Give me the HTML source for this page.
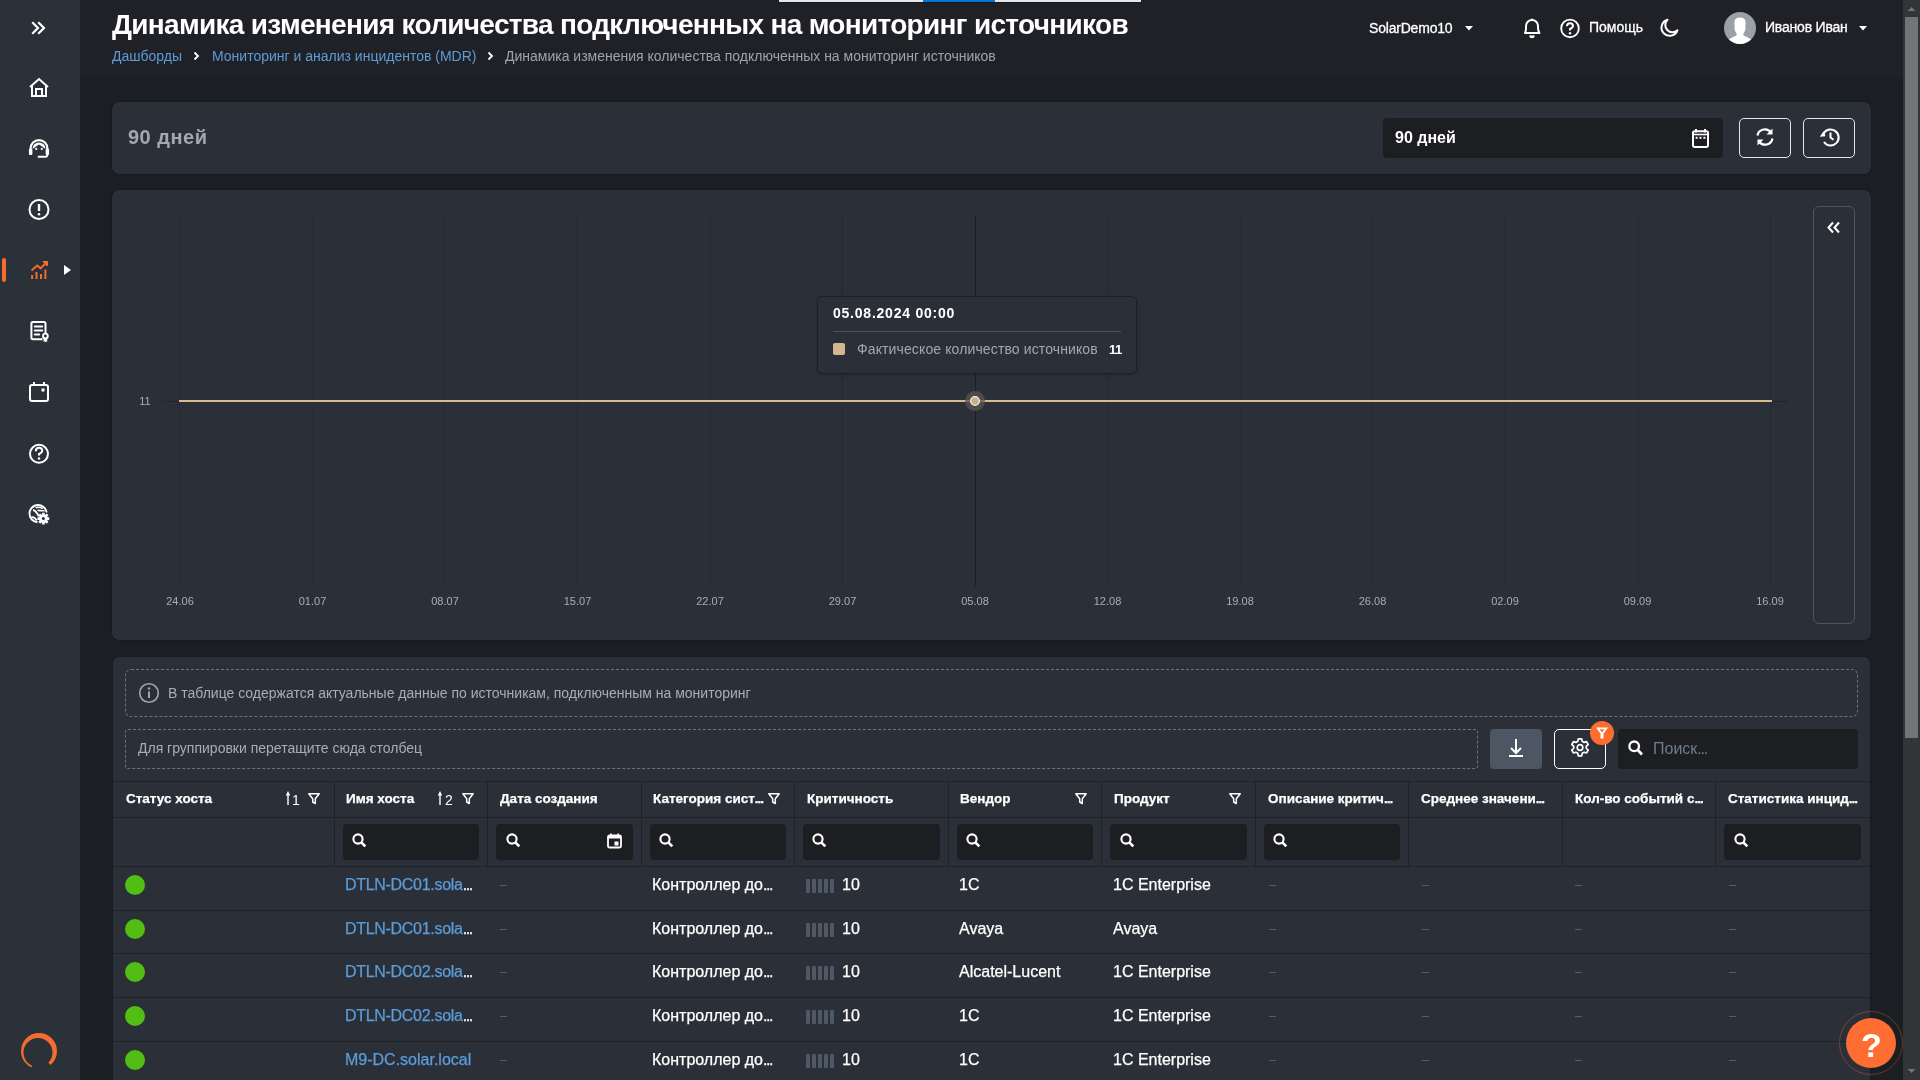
<!DOCTYPE html>
<html><head><meta charset="utf-8">
<style>
*{margin:0;padding:0;box-sizing:border-box}
html,body{width:1920px;height:1080px;overflow:hidden;background:#1b1e22;font-family:"Liberation Sans",sans-serif;color:#fff}
.a{position:absolute}
.t{position:absolute;white-space:nowrap;line-height:1}
#side{left:0;top:0;width:80px;height:1080px;background:#2b3139}
#hdr{left:80px;top:0;width:1823px;height:78px;background:#1f2126}
.panel{position:absolute;left:112px;width:1758px;background:#2b3038;border-radius:6px;box-shadow:0 0 0 1px rgba(20,22,26,.5)}
#sb{left:1903px;top:0;width:17px;height:1080px;background:#323438}
svg{position:absolute;overflow:visible}
.inp{position:absolute;background:#1c1e22;border-radius:4px}
.hd{position:absolute;top:792px;font-size:13.5px;font-weight:700;white-space:nowrap;line-height:1;-webkit-text-stroke:0.25px #fff}
.cell{position:absolute;font-size:16px;white-space:nowrap;line-height:1;-webkit-text-stroke:0.25px currentColor}
.dash{position:absolute;width:12px;height:1px;background:#565d67}
</style></head><body><div style="position:absolute;left:0;top:0;width:1920px;height:1080px;will-change:transform">
<div id="side" class="a"></div>
<div id="hdr" class="a"></div>

<!-- browser overlay bar -->
<div class="a" style="left:779px;top:0;width:362px;height:2px;background:#e6e6e6"></div>
<div class="a" style="left:923px;top:0;width:72px;height:2px;background:#0078d7"></div>
<div class="a" style="left:779px;top:2px;width:362px;height:1px;background:#14171b"></div>

<!-- sidebar icons -->
<svg style="left:0;top:0" width="80" height="1080" viewBox="0 0 80 1080">
 <g fill="none" stroke="#fff" stroke-width="2.2" stroke-linecap="square">
  <path d="M33 23 L38 28 L33 33 M39 23 L44 28 L39 33"/>
 </g>
 <!-- home -->
 <g fill="none" stroke="#fff" stroke-width="2">
  <path d="M30 87 L39 79 L48 87"/>
  <path d="M32 86 V96 H46 V86"/>
  <path d="M36 96 V89 H42 V96"/>
 </g>
 <!-- headset -->
 <path d="M30.6 151 V148.5 A8.4 8.4 0 0 1 47.4 148.5 V151" fill="none" stroke="#fff" stroke-width="2.2"/>
 <rect x="28.9" y="148.8" width="3.5" height="6.2" rx="1.3" fill="#fff"/>
 <rect x="45.6" y="148.8" width="3.5" height="6.2" rx="1.3" fill="#fff"/>
 <path d="M47.3 154 V155 Q47.3 156.8 45.5 156.8 H37.8" fill="none" stroke="#fff" stroke-width="1.9"/>
 <path d="M32.4 149 A6.6 6.6 0 0 1 45.6 149 L39 144.6 Z" fill="#fff"/>
 <circle cx="36.2" cy="148.9" r="1.1" fill="#fff"/><circle cx="41.8" cy="148.9" r="1.1" fill="#fff"/>
 <!-- alert -->
 <circle cx="39" cy="209.5" r="9.5" fill="none" stroke="#fff" stroke-width="2"/>
 <path d="M39 204 V211" stroke="#fff" stroke-width="2.4"/>
 <circle cx="39" cy="214.3" r="1.3" fill="#fff"/>
 <!-- active bar -->
 <rect x="2" y="258" width="4" height="24" rx="2" fill="#f56c2d"/>
 <!-- chart icon -->
 <g stroke="#f56c2d" stroke-width="2" fill="none">
  <path d="M31.5 270.5 L37.3 265.6 L40.6 268.4 L46.5 262.5"/>
  <path d="M43 262 H47 V266"/>
  <path d="M32.1 275 V279 M36.5 272 V279 M41 274 V279 M45.4 269.5 V279"/>
 </g>
 <path d="M64 265 L71 270 L64 275 Z" fill="#fff"/>
 <!-- certificate -->
 <path d="M42.5 339.2 H33 Q31.4 339.2 31.4 337.6 V323.6 Q31.4 322 33 322 H43.9 Q45.5 322 45.5 323.6 V333" fill="none" stroke="#fff" stroke-width="2"/>
 <path d="M34.8 326.5 H42.2 M34.8 330.5 H42.2 M34.8 334.5 H39.2" stroke="#fff" stroke-width="2" stroke-linecap="round"/>
 <circle cx="45.4" cy="336" r="2.4" fill="none" stroke="#fff" stroke-width="1.9"/>
 <path d="M43.6 338 V342.2 L44.5 341.3 L45.4 342.2 L46.3 341.3 L47.2 342.2 V338 Z" fill="#fff"/>
 <!-- calendar -->
 <g fill="none" stroke="#fff" stroke-width="2">
  <rect x="30" y="385" width="18" height="16" rx="2"/>
  <path d="M34 382 V386 M44 382 V386"/>
 </g>
 <rect x="41.5" y="388.5" width="3" height="3" fill="#fff"/>
 <!-- question -->
 <circle cx="39" cy="453.8" r="9" fill="none" stroke="#fff" stroke-width="2"/>
 <path d="M35.8 451.3 Q35.8 447.8 39 447.8 Q42.2 447.8 42.2 450.8 Q42.2 452.6 39 454 V455.5" fill="none" stroke="#fff" stroke-width="2"/>
 <circle cx="39" cy="458.5" r="1.2" fill="#fff"/>
 <!-- globe gear -->
 <path d="M46.6 512.5 A8.6 8.6 0 1 0 37.5 522.2" fill="none" stroke="#fff" stroke-width="1.9"/>
 <path d="M35.6 507.8 Q39.5 506.6 42.8 508.6" fill="none" stroke="#fff" stroke-width="1.5"/>
 <path d="M33 510 Q36 510.5 38.8 516.3" fill="none" stroke="#fff" stroke-width="1.8"/>
 <path d="M37.5 510.3 Q41 511 44.5 510.7" fill="none" stroke="#fff" stroke-width="1.6"/>
 <path d="M31.5 517.2 Q34.5 516.5 36.8 520.5" fill="none" stroke="#fff" stroke-width="1.8"/>
 <g transform="translate(43.4 518.6)">
  <circle r="4.4" fill="#fff"/>
  <path d="M-1.3 -5.9 H1.3 V5.9 H-1.3Z M-5.9 -1.3 V1.3 H5.9 V-1.3Z" fill="#fff"/>
  <path d="M-1.3 -5.9 H1.3 V5.9 H-1.3Z M-5.9 -1.3 V1.3 H5.9 V-1.3Z" fill="#fff" transform="rotate(45)"/>
  <circle r="1.5" fill="#2b3139"/>
 </g>
 <!-- spinner -->
 <defs><clipPath id="spc"><path clip-rule="evenodd" d="M0 1020 H80 V1080 H0 Z M39 1051 L57.9 1074.3 L26.3 1078.2 Z"/></clipPath></defs>
 <path clip-path="url(#spc)" fill-rule="evenodd" fill="#f56c2d" d="M57 1051 A18 18 0 1 1 21 1051 A18 18 0 1 1 57 1051 Z M52.5 1052.5 A14.5 14.5 0 1 0 23.5 1052.5 A14.5 14.5 0 1 0 52.5 1052.5 Z"/>
</svg>

<!-- header -->
<div class="t" style="left:112px;top:10.5px;font-size:28px;font-weight:700;letter-spacing:-0.68px">Динамика изменения количества подключенных на мониторинг источников</div>
<div class="t" style="left:112px;top:49px;font-size:14px;color:#5c9cd8">Дашборды</div>
<svg style="left:192px;top:51px" width="10" height="10"><path d="M2.5 1.5 L6 5 L2.5 8.5" fill="none" stroke="#fff" stroke-width="1.8"/></svg>
<div class="t" style="left:212px;top:49px;font-size:14px;color:#5c9cd8">Мониторинг и анализ инцидентов (MDR)</div>
<svg style="left:486px;top:51px" width="10" height="10"><path d="M2.5 1.5 L6 5 L2.5 8.5" fill="none" stroke="#fff" stroke-width="1.8"/></svg>
<div class="t" style="left:505px;top:49px;font-size:14px;color:#9ea3ab">Динамика изменения количества подключенных на мониторинг источников</div>

<div class="t" style="left:1369px;top:21px;font-size:14px;letter-spacing:-0.2px;-webkit-text-stroke:0.3px #fff">SolarDemo10</div>
<svg style="left:1465px;top:26px" width="8" height="5"><path d="M0 0 H8 L4 4.5Z" fill="#fff"/></svg>
<svg style="left:1520px;top:16px" width="24" height="24" viewBox="0 0 24 24">
 <path d="M5 17 Q6 15 6 12 V10 A6 6 0 0 1 18 10 V12 Q18 15 19.5 17 Z" fill="none" stroke="#fff" stroke-width="2" stroke-linejoin="round"/>
 <path d="M10 19.5 A2 2 0 0 0 14 19.5" fill="#fff" stroke="#fff" stroke-width="1.5"/>
 <circle cx="12" cy="3.7" r="1.2" fill="#fff"/>
</svg>
<svg style="left:1559px;top:17px" width="22" height="22" viewBox="0 0 22 22">
 <circle cx="11" cy="11.4" r="8.8" fill="none" stroke="#fff" stroke-width="1.9"/>
 <path d="M8 9.2 Q8 6.3 11 6.3 Q14 6.3 14 9 Q14 10.6 11 12 V13.4" fill="none" stroke="#fff" stroke-width="2"/>
 <circle cx="11" cy="16.3" r="1.2" fill="#fff"/>
</svg>
<div class="t" style="left:1589px;top:20px;font-size:14px;-webkit-text-stroke:0.3px #fff">Помощь</div>
<svg style="left:1658px;top:17px" width="22" height="22" viewBox="0 0 22 22">
 <path d="M9.5 2.7 A8.2 8.2 0 1 0 19.5 13.2 A7 7 0 0 1 9.5 2.7 Z" fill="none" stroke="#fff" stroke-width="2" stroke-linejoin="round"/>
</svg>
<svg style="left:1724px;top:12px" width="32" height="32" viewBox="0 0 32 32">
 <defs><clipPath id="av"><circle cx="16" cy="16" r="16"/></clipPath></defs>
 <circle cx="16" cy="16" r="16" fill="#9aa0a8"/>
 <g clip-path="url(#av)" fill="#fff">
  <path d="M10.5 10 Q10.5 5.5 16 5.5 Q21.5 5.5 21.5 10 V15 Q21.5 19.5 19.5 21 V23.5 Q24 25 28 28 V34 H4 V28 Q8 25 12.5 23.5 V21 Q10.5 19.5 10.5 15 Z"/>
 </g>
</svg>
<div class="t" style="left:1765px;top:20px;font-size:14px;letter-spacing:-0.2px;-webkit-text-stroke:0.3px #fff">Иванов Иван</div>
<svg style="left:1859px;top:26px" width="8" height="5"><path d="M0 0 H8 L4 4.5Z" fill="#fff"/></svg>

<!-- filter panel -->
<div class="panel" style="top:102px;height:72px;width:1759px;border-radius:7px"></div>
<div class="t" style="left:128px;top:127px;font-size:20px;font-weight:700;color:#a2a8b0;letter-spacing:0.5px">90 дней</div>
<div class="inp" style="left:1383px;top:118px;width:340px;height:40px"></div>
<div class="t" style="left:1395px;top:130px;font-size:16px;font-weight:700;letter-spacing:0px">90 дней</div>
<svg style="left:1688px;top:127px" width="24" height="24" viewBox="0 0 24 24">
 <rect x="5" y="4.3" width="15" height="15.6" rx="1.6" fill="none" stroke="#fff" stroke-width="2"/>
 <path d="M5 7.5 H20" stroke="#fff" stroke-width="1.6"/>
 <path d="M8 2 V5.5 M17 2 V5.5" stroke="#fff" stroke-width="2"/>
 <rect x="7.6" y="9.8" width="2" height="2" fill="#fff"/><rect x="11.5" y="9.8" width="2" height="2" fill="#fff"/><rect x="15.4" y="9.8" width="2" height="2" fill="#fff"/>
</svg>
<div class="a" style="left:1739px;top:118px;width:52px;height:40px;border:1.5px solid #e4e6e9;border-radius:5px"></div>
<svg style="left:1753px;top:125px" width="24" height="24" viewBox="0 0 24 24">
 <path d="M4.5 10.5 A7.5 7.5 0 0 1 18 7.5" fill="none" stroke="#fff" stroke-width="2.2"/>
 <path d="M19.5 3.5 V9.5 H13.5 Z" fill="#fff"/>
 <path d="M19.5 13.5 A7.5 7.5 0 0 1 6 16.5" fill="none" stroke="#fff" stroke-width="2.2"/>
 <path d="M4.5 20.5 V14.5 H10.5 Z" fill="#fff"/>
</svg>
<div class="a" style="left:1803px;top:118px;width:52px;height:40px;border:1.5px solid #e4e6e9;border-radius:5px"></div>
<svg style="left:1818px;top:125px" width="24" height="24" viewBox="0 0 24 24">
 <path d="M5.2 9.5 A8 8 0 1 1 6 17" fill="none" stroke="#fff" stroke-width="2.1"/>
 <path d="M1.8 11.8 L7.5 11.2 L5.6 6.2 Z" fill="#fff"/>
 <path d="M12.5 7.5 V12.5 L15.5 14.8" fill="none" stroke="#fff" stroke-width="2"/>
</svg>

<!-- chart panel -->
<div class="panel" style="top:190px;height:450px;width:1759px;border-radius:7px"></div>
<svg style="left:0;top:0" width="1920" height="1080" viewBox="0 0 1920 1080">
 <g stroke="#23272d" stroke-width="1" stroke-dasharray="2.5 1.5">
  <path d="M179.50 216 V586 M312.08 216 V586 M444.66 216 V586 M577.24 216 V586 M709.82 216 V586 M842.40 216 V586 M1107.56 216 V586 M1240.14 216 V586 M1372.72 216 V586 M1505.30 216 V586 M1637.88 216 V586 M1770.46 216 V586"/>
  </g>
 <path d="M164 401.5 H1787" stroke="#1d2025" stroke-width="1" stroke-dasharray="3 1"/>
 <path d="M975.5 216 V586" stroke="#1b1e22" stroke-width="1"/>
 <path d="M179 401 H1772" stroke="#d9bb8f" stroke-width="2"/>
 <circle cx="975" cy="401" r="10" fill="#5a5650" fill-opacity="0.75"/>
 <circle cx="975" cy="401" r="4.3" fill="#c9ae87" stroke="#f3efe9" stroke-width="1.3"/>
 <g font-size="11" fill="#a9aeb5" text-anchor="middle">
  <text x="180" y="605">24.06</text><text x="312.5" y="605">01.07</text><text x="445" y="605">08.07</text>
  <text x="577.5" y="605">15.07</text><text x="710" y="605">22.07</text><text x="842.5" y="605">29.07</text>
  <text x="975" y="605">05.08</text><text x="1107.5" y="605">12.08</text><text x="1240" y="605">19.08</text>
  <text x="1372.5" y="605">26.08</text><text x="1505" y="605">02.09</text><text x="1637.5" y="605">09.09</text>
  <text x="1770" y="605">16.09</text>
  <text x="145" y="405">11</text>
 </g>
</svg>
<!-- tooltip -->
<div class="a" style="left:817px;top:296px;width:320px;height:78px;background:#2b3038;border:1px solid #1d2025;border-radius:5px;box-shadow:0 1px 3px rgba(0,0,0,.2)"></div>
<div class="t" style="left:833px;top:306px;font-size:14px;font-weight:700;letter-spacing:0.77px">05.08.2024 00:00</div>
<div class="a" style="left:833px;top:331px;width:288px;height:1px;background:#4a5260"></div>
<div class="a" style="left:833px;top:343px;width:12px;height:12px;background:#d4b78e;border-radius:2px"></div>
<div class="t" style="left:857px;top:342px;font-size:14px;color:#a3a8b0;letter-spacing:0.12px">Фактическое количество источников</div>
<div class="t" style="left:1109px;top:343px;font-size:13px;font-weight:700;letter-spacing:-0.6px">11</div>
<!-- collapse -->
<div class="a" style="left:1813px;top:206px;width:42px;height:418px;border:1px solid #4d5562;border-radius:6px"></div>
<svg style="left:1826px;top:220px" width="16" height="16" viewBox="0 0 16 16">
 <path d="M7 2.5 L2.5 7.5 L7 12.5 M13 2.5 L8.5 7.5 L13 12.5" fill="none" stroke="#fff" stroke-width="2"/>
</svg>

<!-- table panel -->
<div class="panel" style="top:657px;height:430px;left:113px;width:1757px"></div>
<div class="a" style="left:125px;top:669px;width:1733px;height:48px;border:1px dashed #6b727c;border-radius:6px"></div>
<svg style="left:137px;top:682px" width="24" height="24" viewBox="0 0 24 24">
 <circle cx="12" cy="11" r="9.3" fill="none" stroke="#a0a6ae" stroke-width="1.6"/>
 <path d="M12 9.5 V16" stroke="#a0a6ae" stroke-width="2"/>
 <circle cx="12" cy="6.5" r="1.2" fill="#a0a6ae"/>
</svg>
<div class="t" style="left:168px;top:686px;font-size:14px;color:#a7adb5">В таблице содержатся актуальные данные по источникам, подключенным на мониторинг</div>
<div class="a" style="left:125px;top:729px;width:1353px;height:40px;border:1px dashed #6b727c;border-radius:3px"></div>
<div class="t" style="left:138px;top:741px;font-size:14px;color:#a7adb5">Для группировки перетащите сюда столбец</div>
<div class="a" style="left:1490px;top:729px;width:52px;height:40px;background:#4d5663;border-radius:4px"></div>
<svg style="left:1504px;top:737px" width="24" height="24" viewBox="0 0 24 24">
 <path d="M12 2 V16 M7 11 L12 16 L17 11" fill="none" stroke="#fff" stroke-width="2"/>
 <path d="M5 19 H19" stroke="#fff" stroke-width="2"/>
</svg>
<div class="a" style="left:1554px;top:729px;width:52px;height:40px;border:1.5px solid #fff;border-radius:5px"></div>
<svg style="left:1568px;top:736px" width="24" height="24" viewBox="0 0 24 24">
 <path id="gear" d="M10.3 2.8 h3.4 l0.5 2.5 l1.9 1.1 l2.4 -0.8 l1.7 2.9 l-1.9 1.7 v2.2 l1.9 1.7 l-1.7 2.9 l-2.4 -0.8 l-1.9 1.1 l-0.5 2.5 h-3.4 l-0.5 -2.5 l-1.9 -1.1 l-2.4 0.8 l-1.7 -2.9 l1.9 -1.7 v-2.2 l-1.9 -1.7 l1.7 -2.9 l2.4 0.8 l1.9 -1.1 Z" fill="none" stroke="#fff" stroke-width="1.7" stroke-linejoin="round"/>
 <circle cx="12" cy="11.5" r="2.8" fill="none" stroke="#fff" stroke-width="1.7"/>
</svg>
<svg style="left:1590px;top:721px" width="24" height="24" viewBox="0 0 24 24">
 <circle cx="12" cy="12" r="12" fill="#fd6d30"/>
 <path d="M6 6.5 H18 L13.5 12.5 V17.5 H10.5 V12.5 Z" fill="#fff"/>
 <path d="M9.5 8.3 H14.5 L12 11.5 Z" fill="#fd6d30"/>
</svg>
<div class="inp" style="left:1618px;top:729px;width:240px;height:40px"></div>
<svg style="left:1626px;top:738px" width="20" height="20" viewBox="0 0 20 20">
 <circle cx="8.2" cy="8.3" r="4.8" fill="none" stroke="#fff" stroke-width="2.3"/>
 <path d="M11.7 11.8 L16 16.5" stroke="#fff" stroke-width="2.7"/>
</svg>
<div class="t" style="left:1653px;top:741px;font-size:16px;color:#707d8c">Поиск<span style="letter-spacing:-1.2px">...</span></div>

<!-- table grid -->
<div class="a" style="left:113px;top:781px;width:1757px;height:1px;background:#1f2227"></div>
<div class="a" style="left:113px;top:817px;width:1757px;height:1px;background:#1f2227"></div>
<div class="a" style="left:113px;top:866px;width:1757px;height:1px;background:#1f2227"></div>
<div class="a" style="left:113px;top:910px;width:1757px;height:1px;background:#1f2227"></div>
<div class="a" style="left:113px;top:953px;width:1757px;height:1px;background:#1f2227"></div>
<div class="a" style="left:113px;top:997px;width:1757px;height:1px;background:#1f2227"></div>
<div class="a" style="left:113px;top:1041px;width:1757px;height:1px;background:#1f2227"></div>
<svg style="left:0;top:0" width="1920" height="1080">
 <path d="M334.5 782 V866 M487.5 782 V866 M641.5 782 V866 M794.5 782 V866 M948.5 782 V866 M1101.5 782 V866 M1255.5 782 V866 M1408.5 782 V866 M1562.5 782 V866 M1715.5 782 V866" stroke="#1f2227" stroke-width="1"/>
</svg>

<div class="hd" style="left:126px">Статус хоста</div>
<div class="hd" style="left:346px">Имя хоста</div>
<div class="hd" style="left:500px">Дата создания</div>
<div class="hd" style="left:653px">Категория сист<span style="letter-spacing:-1px">...</span></div>
<div class="hd" style="left:807px">Критичность</div>
<div class="hd" style="left:960px">Вендор</div>
<div class="hd" style="left:1114px">Продукт</div>
<div class="hd" style="left:1268px">Описание критич<span style="letter-spacing:-1px">...</span></div>
<div class="hd" style="left:1421px">Среднее значени<span style="letter-spacing:-1px">...</span></div>
<div class="hd" style="left:1575px">Кол-во событий с<span style="letter-spacing:-1px">...</span></div>
<div class="hd" style="left:1728px">Статистика инцид<span style="letter-spacing:-1px">...</span></div>

<!-- sort / filter icons -->
<svg style="left:0;top:0" width="1920" height="1080">
 <defs>
  <g id="flt"><path d="M0.8 0.8 H11.2 L7.3 5.8 V10.5 L4.7 9 V5.8 Z" fill="none" stroke="#fff" stroke-width="1.5" stroke-linejoin="round"/></g>
  <g id="sr"><path d="M3 3 V14" stroke="#fff" stroke-width="1.4"/><path d="M0.8 4.5 L3 0 L5.2 4.5 Z" fill="#fff"/></g>
 </defs>
 <use href="#sr" x="285" y="791"/><text x="292" y="805" font-size="14" fill="#fff">1</text>
 <use href="#flt" x="308" y="793"/>
 <use href="#sr" x="437" y="791"/><text x="445" y="805" font-size="14" fill="#fff">2</text>
 <use href="#flt" x="462" y="793"/>
 <use href="#flt" x="768" y="793"/>
 <use href="#flt" x="1075" y="793"/>
 <use href="#flt" x="1229" y="793"/>
</svg>

<!-- filter inputs -->
<div class="inp" style="left:343px;top:824px;width:136px;height:36px"></div>
<div class="inp" style="left:496px;top:824px;width:137px;height:36px"></div>
<div class="inp" style="left:650px;top:824px;width:136px;height:36px"></div>
<div class="inp" style="left:803px;top:824px;width:137px;height:36px"></div>
<div class="inp" style="left:957px;top:824px;width:136px;height:36px"></div>
<div class="inp" style="left:1110px;top:824px;width:137px;height:36px"></div>
<div class="inp" style="left:1264px;top:824px;width:136px;height:36px"></div>
<div class="inp" style="left:1724px;top:824px;width:137px;height:36px"></div>
<svg style="left:0;top:0" width="1920" height="1080">
 <defs><g id="mg"><circle cx="6" cy="6" r="4.6" fill="none" stroke="#fff" stroke-width="2.1"/><path d="M9.3 9.3 L13.3 13.3" stroke="#fff" stroke-width="2.6"/></g></defs>
 <use href="#mg" x="352" y="833"/><use href="#mg" x="506" y="833"/><use href="#mg" x="659" y="833"/>
 <use href="#mg" x="812" y="833"/><use href="#mg" x="966" y="833"/><use href="#mg" x="1120" y="833"/>
 <use href="#mg" x="1273" y="833"/><use href="#mg" x="1734" y="833"/>
 <g transform="translate(607 833)">
  <rect x="1" y="2.5" width="13" height="12" rx="1.5" fill="none" stroke="#fff" stroke-width="1.8"/>
  <rect x="1" y="2.5" width="13" height="3" fill="#fff"/>
  <path d="M4 0.5 V3 M11 0.5 V3" stroke="#fff" stroke-width="1.6"/>
  <rect x="7.5" y="8.5" width="4" height="4" fill="#fff"/>
 </g>
</svg>

<!-- rows -->
<svg style="left:0;top:0" width="1920" height="1080">
 <g fill="#52bd12">
  <circle cx="135" cy="885" r="10"/><circle cx="135" cy="929" r="10"/><circle cx="135" cy="972" r="10"/><circle cx="135" cy="1016" r="10"/><circle cx="135" cy="1060" r="10"/>
 </g>
 <defs><g id="bars" fill="#4f5966"><rect x="0" y="0" width="4" height="14" rx="1"/><rect x="6" y="0" width="4" height="14" rx="1"/><rect x="12" y="0" width="4" height="14" rx="1"/><rect x="18" y="0" width="4" height="14" rx="1"/><rect x="24" y="0" width="4" height="14" rx="1"/></g></defs>
 <use href="#bars" x="806" y="879"/><use href="#bars" x="806" y="923"/><use href="#bars" x="806" y="966"/><use href="#bars" x="806" y="1010"/><use href="#bars" x="806" y="1054"/>
</svg>
<div id="rows">
<div class="cell" style="left:345px;top:877px;color:#5c9cd8;letter-spacing:-0.3px">DTLN-DC01.sola<span style="color:#fff;letter-spacing:-1.4px">...</span></div>
<div class="cell" style="left:652px;top:877px">Контроллер до<span style="letter-spacing:-1.4px">...</span></div>
<div class="cell" style="left:842px;top:877px;font-size:16px">10</div>
<div class="cell" style="left:959px;top:877px">1C</div>
<div class="cell" style="left:1113px;top:877px">1C Enterprise</div>
<div class="dash" style="left:500px;top:885px;width:7px"></div>
<div class="dash" style="left:1269px;top:885px;width:7px"></div>
<div class="dash" style="left:1422px;top:885px;width:7px"></div>
<div class="dash" style="left:1575px;top:885px;width:7px"></div>
<div class="dash" style="left:1729px;top:885px;width:7px"></div>
<div class="cell" style="left:345px;top:921px;color:#5c9cd8;letter-spacing:-0.3px">DTLN-DC01.sola<span style="color:#fff;letter-spacing:-1.4px">...</span></div>
<div class="cell" style="left:652px;top:921px">Контроллер до<span style="letter-spacing:-1.4px">...</span></div>
<div class="cell" style="left:842px;top:921px;font-size:16px">10</div>
<div class="cell" style="left:959px;top:921px">Avaya</div>
<div class="cell" style="left:1113px;top:921px">Avaya</div>
<div class="dash" style="left:500px;top:929px;width:7px"></div>
<div class="dash" style="left:1269px;top:929px;width:7px"></div>
<div class="dash" style="left:1422px;top:929px;width:7px"></div>
<div class="dash" style="left:1575px;top:929px;width:7px"></div>
<div class="dash" style="left:1729px;top:929px;width:7px"></div>
<div class="cell" style="left:345px;top:964px;color:#5c9cd8;letter-spacing:-0.3px">DTLN-DC02.sola<span style="color:#fff;letter-spacing:-1.4px">...</span></div>
<div class="cell" style="left:652px;top:964px">Контроллер до<span style="letter-spacing:-1.4px">...</span></div>
<div class="cell" style="left:842px;top:964px;font-size:16px">10</div>
<div class="cell" style="left:959px;top:964px">Alcatel-Lucent</div>
<div class="cell" style="left:1113px;top:964px">1C Enterprise</div>
<div class="dash" style="left:500px;top:972px;width:7px"></div>
<div class="dash" style="left:1269px;top:972px;width:7px"></div>
<div class="dash" style="left:1422px;top:972px;width:7px"></div>
<div class="dash" style="left:1575px;top:972px;width:7px"></div>
<div class="dash" style="left:1729px;top:972px;width:7px"></div>
<div class="cell" style="left:345px;top:1008px;color:#5c9cd8;letter-spacing:-0.3px">DTLN-DC02.sola<span style="color:#fff;letter-spacing:-1.4px">...</span></div>
<div class="cell" style="left:652px;top:1008px">Контроллер до<span style="letter-spacing:-1.4px">...</span></div>
<div class="cell" style="left:842px;top:1008px;font-size:16px">10</div>
<div class="cell" style="left:959px;top:1008px">1C</div>
<div class="cell" style="left:1113px;top:1008px">1C Enterprise</div>
<div class="dash" style="left:500px;top:1016px;width:7px"></div>
<div class="dash" style="left:1269px;top:1016px;width:7px"></div>
<div class="dash" style="left:1422px;top:1016px;width:7px"></div>
<div class="dash" style="left:1575px;top:1016px;width:7px"></div>
<div class="dash" style="left:1729px;top:1016px;width:7px"></div>
<div class="cell" style="left:345px;top:1052px;color:#5c9cd8;letter-spacing:0">M9-DC.solar.local</div>
<div class="cell" style="left:652px;top:1052px">Контроллер до<span style="letter-spacing:-1.4px">...</span></div>
<div class="cell" style="left:842px;top:1052px;font-size:16px">10</div>
<div class="cell" style="left:959px;top:1052px">1C</div>
<div class="cell" style="left:1113px;top:1052px">1C Enterprise</div>
<div class="dash" style="left:500px;top:1060px;width:7px"></div>
<div class="dash" style="left:1269px;top:1060px;width:7px"></div>
<div class="dash" style="left:1422px;top:1060px;width:7px"></div>
<div class="dash" style="left:1575px;top:1060px;width:7px"></div>
<div class="dash" style="left:1729px;top:1060px;width:7px"></div>
</div>

<!-- help fab -->
<div class="a" style="left:1839px;top:1011px;width:64px;height:64px;border-radius:50%;border:1px solid rgba(245,108,45,.35)"></div>
<div class="a" style="left:1846px;top:1018px;width:50px;height:50px;border-radius:50%;background:#fe6d31"></div>
<div class="t" style="left:1861px;top:1028px;font-size:34px;font-weight:700">?</div>

<!-- scrollbar -->
<div id="sb" class="a"></div>
<svg style="left:1903px;top:0" width="17" height="1080">
 <path d="M4.5 11 L8.5 7 L12.5 11Z" fill="#737478"/>
 <rect x="2" y="17" width="13" height="721" fill="#737478"/>
 <path d="M4.5 1069 L8.5 1073 L12.5 1069Z" fill="#737478"/>
</svg>
</div></body></html>
